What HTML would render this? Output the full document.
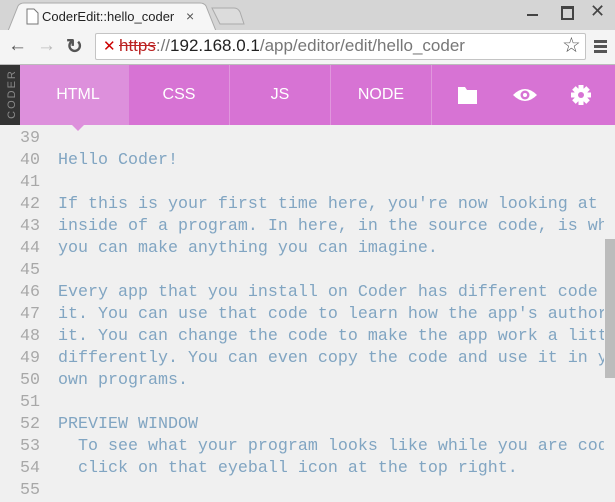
<!DOCTYPE html>
<html><head><style>
body{margin:0;width:615px;height:488px;overflow:hidden;background:#f0f0f0;font-family:"Liberation Sans",sans-serif;position:relative}
.abs{position:absolute}
.code{font-family:"Liberation Mono",monospace;font-size:16.67px;line-height:22px;white-space:pre}
</style></head><body>
<div class="abs" style="left:0;top:0;width:615px;height:30px;background:#d5d5d5"></div>
<svg class="abs" style="left:0;top:0" width="260" height="31">
<path d="M8 31 L18 6 Q20 3 24 3 L200 3 Q204 3 206 6 L216 31 Z" fill="#f6f6f6" stroke="#aaa"/>
<path d="M212 8 L234 8 Q238 8 240 12 L244 24 L220 24 Z" fill="#dcdcdc" stroke="#aaa"/>
<path d="M27 9 h7 l4 4 v11 h-11 z" fill="#fff" stroke="#777"/>
</svg>
<div class="abs" style="left:42px;top:9px;font-size:13px;color:#222">CoderEdit::hello_coder</div>
<div class="abs" style="left:186px;top:8px;font-size:14px;color:#555">×</div>
<div class="abs" style="left:527px;top:14px;width:11px;height:2px;background:#444"></div>
<div class="abs" style="left:561px;top:6px;width:9px;height:9px;border:2px solid #444;border-top-width:3px"></div>
<div class="abs" style="left:590px;top:1px;font-size:18px;color:#444">✕</div>
<div class="abs" style="left:0;top:30px;width:615px;height:34px;background:#f4f4f4;border-bottom:1px solid #bbb"></div>
<div class="abs" style="left:8px;top:35px;font-size:19px;color:#555;font-weight:bold">←</div>
<div class="abs" style="left:37px;top:35px;font-size:19px;color:#bbb;font-weight:bold">→</div>
<div class="abs" style="left:66px;top:34px;font-size:20px;color:#555;font-weight:bold">↻</div>
<div class="abs" style="left:95px;top:33px;width:489px;height:25px;background:#fff;border:1px solid #c4c4c4;border-radius:2px"></div>
<div class="abs" style="left:103px;top:37px;font-size:15px;color:#c00">✕</div>
<div class="abs" style="left:119px;top:36px;font-size:17px;color:#222;white-space:nowrap"><span style="color:#b22;text-decoration:line-through">https</span><span style="color:#777">://</span>192.168.0.1<span style="color:#777">/app/editor/edit/hello_coder</span></div>
<div class="abs" style="left:562px;top:33px;font-size:21px;color:#555">☆</div>
<div class="abs" style="left:594px;top:40px;width:13px;height:3px;background:#555;box-shadow:0 5px #555,0 10px #555"></div>
<div class="abs" style="left:0;top:65px;width:20px;height:60px;background:#333"></div>
<div class="abs" style="left:-13px;top:88px;transform:rotate(-90deg);font-size:11px;letter-spacing:2px;color:#888">CODER</div>
<div class="abs" style="left:20px;top:65px;width:595px;height:60px;background:#d773d4"></div>
<div class="abs" style="left:20px;top:65px;width:109px;height:60px;background:#dd90dc"></div>
<div class="abs" style="left:229px;top:65px;width:1px;height:60px;background:#e097dd"></div>
<div class="abs" style="left:330px;top:65px;width:1px;height:60px;background:#e097dd"></div>
<div class="abs" style="left:431px;top:65px;width:1px;height:60px;background:#e097dd"></div>
<div class="abs" style="left:72px;top:125px;width:0;height:0;border-left:6px solid transparent;border-right:6px solid transparent;border-top:6px solid #dd90dc"></div>
<div class="abs" style="top:86px;left:20px;width:116px;text-align:center;color:#fff;font-size:16px">HTML</div>
<div class="abs" style="top:86px;left:129px;width:100px;text-align:center;color:#fff;font-size:16px">CSS</div>
<div class="abs" style="top:86px;left:230px;width:100px;text-align:center;color:#fff;font-size:16px">JS</div>
<div class="abs" style="top:86px;left:331px;width:100px;text-align:center;color:#fff;font-size:16px">NODE</div>
<svg class="abs" style="left:455px;top:83px" width="140" height="24">
<path d="M3 4 h7 l2 3 h10 v14 h-19 z" fill="#fff"/>
<path d="M58 12 Q70 0 82 12 Q70 24 58 12 Z" fill="#fff"/><circle cx="70" cy="12" r="4.5" fill="#d773d4"/><circle cx="70" cy="12" r="2" fill="#fff"/>
<g transform="translate(126,12)" fill="#fff"><circle r="7"/><rect x="-2.5" y="-10" width="5" height="20"/><rect x="-2.5" y="-10" width="5" height="20" transform="rotate(45)"/><rect x="-2.5" y="-10" width="5" height="20" transform="rotate(90)"/><rect x="-2.5" y="-10" width="5" height="20" transform="rotate(135)"/><circle r="3" fill="#d773d4"/></g>
</svg>
<div class="abs code" style="left:0;top:128px;width:40px;text-align:right;color:#a8a8a8">39
40
41
42
43
44
45
46
47
48
49
50
51
52
53
54
55</div>
<div class="abs code" style="left:58px;top:128px;width:546px;overflow:hidden;height:362px;color:#81a5c2">
Hello Coder!

If this is your first time here, you're now looking at the
inside of a program. In here, in the source code, is where
you can make anything you can imagine.

Every app that you install on Coder has different code in
it. You can use that code to learn how the app's author made
it. You can change the code to make the app work a little
differently. You can even copy the code and use it in your
own programs.

PREVIEW WINDOW
  To see what your program looks like while you are coding,
  click on that eyeball icon at the top right.
</div>
<div class="abs" style="left:605px;top:239px;width:10px;height:139px;background:#bcbcbc"></div>
</body></html>
